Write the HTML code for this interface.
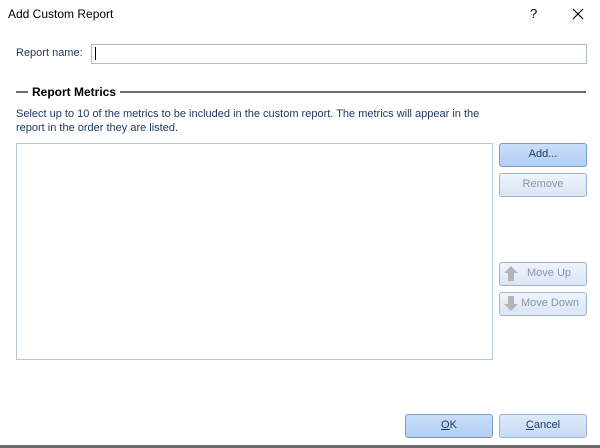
<!DOCTYPE html><html><head><style>
body{margin:0;width:600px;height:448px;background:#fff;font-family:"Liberation Sans",sans-serif;position:relative;overflow:hidden;color:#1e3a64;font-size:11px}
.a{position:absolute}
.btn{position:absolute;box-sizing:border-box;width:88px;height:24px;border:1px solid #9db5d2;border-radius:3px;background:linear-gradient(#eef4fc,#d9e6f5);text-align:center;line-height:21px;font-size:11px;color:#1e3a64}
.blue{background:linear-gradient(#c9defa,#b2cff3);border-color:#7a9cc9}
.dis{color:#8a96a4}
</style></head><body>
<div class="a" style="left:8px;top:7px;font-size:12px;color:#000">Add Custom Report</div>
<div class="a" style="left:530px;top:6px;font-size:13px;color:#000">?</div>
<svg class="a" style="left:572px;top:8px" width="12" height="12"><path d="M1 1L11 11M11 1L1 11" stroke="#000" stroke-width="1.2"/></svg>
<div class="a" style="left:16px;top:47px">Report name:</div>
<div class="a" style="left:91px;top:44px;width:494px;height:18px;border:1px solid #a8bcd6"></div>
<div class="a" style="left:95px;top:47px;width:1px;height:13px;background:#000"></div>
<div class="a" style="left:16px;top:91px;width:12px;height:2px;background:#6d6d6d"></div>
<div class="a" style="left:32px;top:85px;font-weight:bold;font-size:12px;color:#000">Report Metrics</div>
<div class="a" style="left:120px;top:91px;width:466px;height:2px;background:#6d6d6d"></div>
<div class="a" style="left:16px;top:107px;line-height:14px">Select up to 10 of the metrics to be included in the custom report. The metrics will appear in the<br>report in the order they are listed.</div>
<div class="a" style="left:16px;top:143px;width:475px;height:215px;border:1px solid #b5c7dd"></div>
<div class="btn blue" style="left:499px;top:143px">Add...</div>
<div class="btn dis" style="left:499px;top:173px">Remove</div>
<div class="btn dis" style="left:499px;top:262px;padding-left:12px">Move Up</div>
<svg class="a" style="left:504px;top:266px" width="14" height="16"><path d="M7 0L14 7H10V15H4V7H0Z" fill="#b4b4b4"/></svg>
<div class="btn dis" style="left:499px;top:292px;padding-left:14px">Move Down</div>
<svg class="a" style="left:504px;top:296px" width="14" height="16"><path d="M4 0H10V8H14L7 15L0 8H4Z" fill="#b4b4b4"/></svg>
<div class="btn blue" style="left:405px;top:414px"><u>O</u>K</div>
<div class="btn" style="left:499px;top:414px;background:linear-gradient(#dce9fa,#c7dbf5)"><u>C</u>ancel</div>
<div class="a" style="left:0;top:445px;width:600px;height:3px;background:#6a6a6a"></div>
</body></html>
